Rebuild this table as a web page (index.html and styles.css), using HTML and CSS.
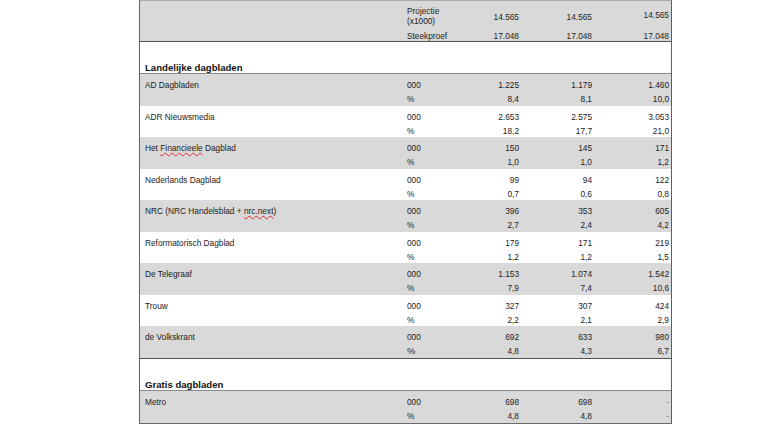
FILE: index.html
```html
<!DOCTYPE html>
<html lang="nl">
<head>
<meta charset="utf-8">
<title>Bereik dagbladen</title>
<link rel="stylesheet" href="styles.css">
</head>
<body>
<div class="sheet">
  <div class="hdr">
    <div class="c-label"></div>
    <div class="c-unit h-proj">Projectie<br>(x1000)</div>
    <div class="c-num h-num">14.565</div>
    <div class="c-num h-num">14.565</div>
    <div class="c-num h-num h-up">14.565</div>
    <div class="c-label"></div>
    <div class="c-unit h-row2">Steekproef</div>
    <div class="c-num h-row2">17.048</div>
    <div class="c-num h-row2">17.048</div>
    <div class="c-num h-row2">17.048</div>
  </div>

  <div class="section"><span>Landelijke dagbladen</span></div>

  <div class="block gray">
    <div class="c-label r1">AD Dagbladen</div><div class="c-unit r1">000</div><div class="c-num r1">1.225</div><div class="c-num r1">1.179</div><div class="c-num r1">1.460</div>
    <div class="c-label r2"></div><div class="c-unit r2">%</div><div class="c-num r2">8,4</div><div class="c-num r2">8,1</div><div class="c-num r2">10,0</div>
  </div>
  <div class="block">
    <div class="c-label r1">ADR Nieuwsmedia</div><div class="c-unit r1">000</div><div class="c-num r1">2.653</div><div class="c-num r1">2.575</div><div class="c-num r1">3.053</div>
    <div class="c-label r2"></div><div class="c-unit r2">%</div><div class="c-num r2">18,2</div><div class="c-num r2">17,7</div><div class="c-num r2">21,0</div>
  </div>
  <div class="block gray">
    <div class="c-label r1">Het <span class="spell">Financieele</span> Dagblad</div><div class="c-unit r1">000</div><div class="c-num r1">150</div><div class="c-num r1">145</div><div class="c-num r1">171</div>
    <div class="c-label r2"></div><div class="c-unit r2">%</div><div class="c-num r2">1,0</div><div class="c-num r2">1,0</div><div class="c-num r2">1,2</div>
  </div>
  <div class="block">
    <div class="c-label r1">Nederlands Dagblad</div><div class="c-unit r1">000</div><div class="c-num r1">99</div><div class="c-num r1">94</div><div class="c-num r1">122</div>
    <div class="c-label r2"></div><div class="c-unit r2">%</div><div class="c-num r2">0,7</div><div class="c-num r2">0,6</div><div class="c-num r2">0,8</div>
  </div>
  <div class="block gray">
    <div class="c-label r1">NRC (NRC Handelsblad + <span class="spell">nrc.next</span>)</div><div class="c-unit r1">000</div><div class="c-num r1">396</div><div class="c-num r1">353</div><div class="c-num r1">605</div>
    <div class="c-label r2"></div><div class="c-unit r2">%</div><div class="c-num r2">2,7</div><div class="c-num r2">2,4</div><div class="c-num r2">4,2</div>
  </div>
  <div class="block">
    <div class="c-label r1">Reformatorisch Dagblad</div><div class="c-unit r1">000</div><div class="c-num r1">179</div><div class="c-num r1">171</div><div class="c-num r1">219</div>
    <div class="c-label r2"></div><div class="c-unit r2">%</div><div class="c-num r2">1,2</div><div class="c-num r2">1,2</div><div class="c-num r2">1,5</div>
  </div>
  <div class="block gray">
    <div class="c-label r1">De Telegraaf</div><div class="c-unit r1">000</div><div class="c-num r1">1.153</div><div class="c-num r1">1.074</div><div class="c-num r1">1.542</div>
    <div class="c-label r2"></div><div class="c-unit r2">%</div><div class="c-num r2">7,9</div><div class="c-num r2">7,4</div><div class="c-num r2">10,6</div>
  </div>
  <div class="block">
    <div class="c-label r1">Trouw</div><div class="c-unit r1">000</div><div class="c-num r1">327</div><div class="c-num r1">307</div><div class="c-num r1">424</div>
    <div class="c-label r2"></div><div class="c-unit r2">%</div><div class="c-num r2">2,2</div><div class="c-num r2">2,1</div><div class="c-num r2">2,9</div>
  </div>
  <div class="block gray last">
    <div class="c-label r1">de Volkskrant</div><div class="c-unit r1">000</div><div class="c-num r1">692</div><div class="c-num r1">633</div><div class="c-num r1">980</div>
    <div class="c-label r2"></div><div class="c-unit r2 pct-big">%</div><div class="c-num r2">4,8</div><div class="c-num r2">4,3</div><div class="c-num r2">6,7</div>
  </div>

  <div class="section"><span>Gratis dagbladen</span></div>

  <div class="block gray final">
    <div class="c-label r1">Metro</div><div class="c-unit r1">000</div><div class="c-num r1">698</div><div class="c-num r1">698</div><div class="c-num r1 dash">-</div>
    <div class="c-label r2"></div><div class="c-unit r2">%</div><div class="c-num r2">4,8</div><div class="c-num r2">4,8</div><div class="c-num r2 dash">-</div>
  </div>
</div>
</body>
</html>
```

FILE: styles.css
```css
html, body {
  margin: 0;
  padding: 0;
  background: #ffffff;
}

body {
  font-family: "Liberation Sans", Arial, sans-serif;
  font-size: 8.3px;
  color: #222222;
}

.sheet {
  margin-left: 139px;
  width: 531px;
  border-left: 1px solid #5e5e5e;
  border-right: 1px solid #5e5e5e;
  border-top: 1px solid #a8a8a8;
}

.hdr,
.block {
  display: grid;
  grid-template-columns: 265px 45px 71px 73px 77px;
}

.hdr {
  background: #d9d9d9;
  height: 40px;
  grid-template-rows: 25px 15px;
  border-bottom: 1px solid #505050;
  line-height: 10px;
}

.c-label {
  padding-left: 5px;
  white-space: nowrap;
}

.c-unit {
  padding-left: 2px;
  white-space: nowrap;
}

.c-num {
  text-align: right;
  padding-right: 2px;
}

.h-proj {
  padding-top: 5px;
}

.h-num {
  padding-top: 11px;
}

.h-up {
  padding-top: 9px;
}

.h-row2 {
  padding-top: 5px;
}

.section {
  height: 31px;
  display: flex;
  align-items: flex-end;
  padding-left: 5px;
  border-bottom: 1px solid #8a8a8a;
}

.section span {
  font-weight: bold;
  font-size: 9.6px;
  line-height: 11px;
  color: #111111;
}

.block {
  height: 31.5px;
  grid-template-rows: 16px 15.5px;
  line-height: 10px;
}

.block.gray {
  background: #d9d9d9;
}

.block.last {
  border-bottom: 1px solid #505050;
}

.block.final {
  height: 32px;
  grid-template-rows: 16px 16px;
  border-bottom: 1px solid #6a6a6a;
}

.r1 {
  padding-top: 6px;
}

.r2 {
  padding-top: 4px;
}

.pct-big {
  font-size: 9.4px;
}

.dash {
  color: #777777;
}

.spell {
  text-decoration: underline wavy #e0302c;
  text-decoration-thickness: 1px;
  text-underline-offset: 1px;
}
```
